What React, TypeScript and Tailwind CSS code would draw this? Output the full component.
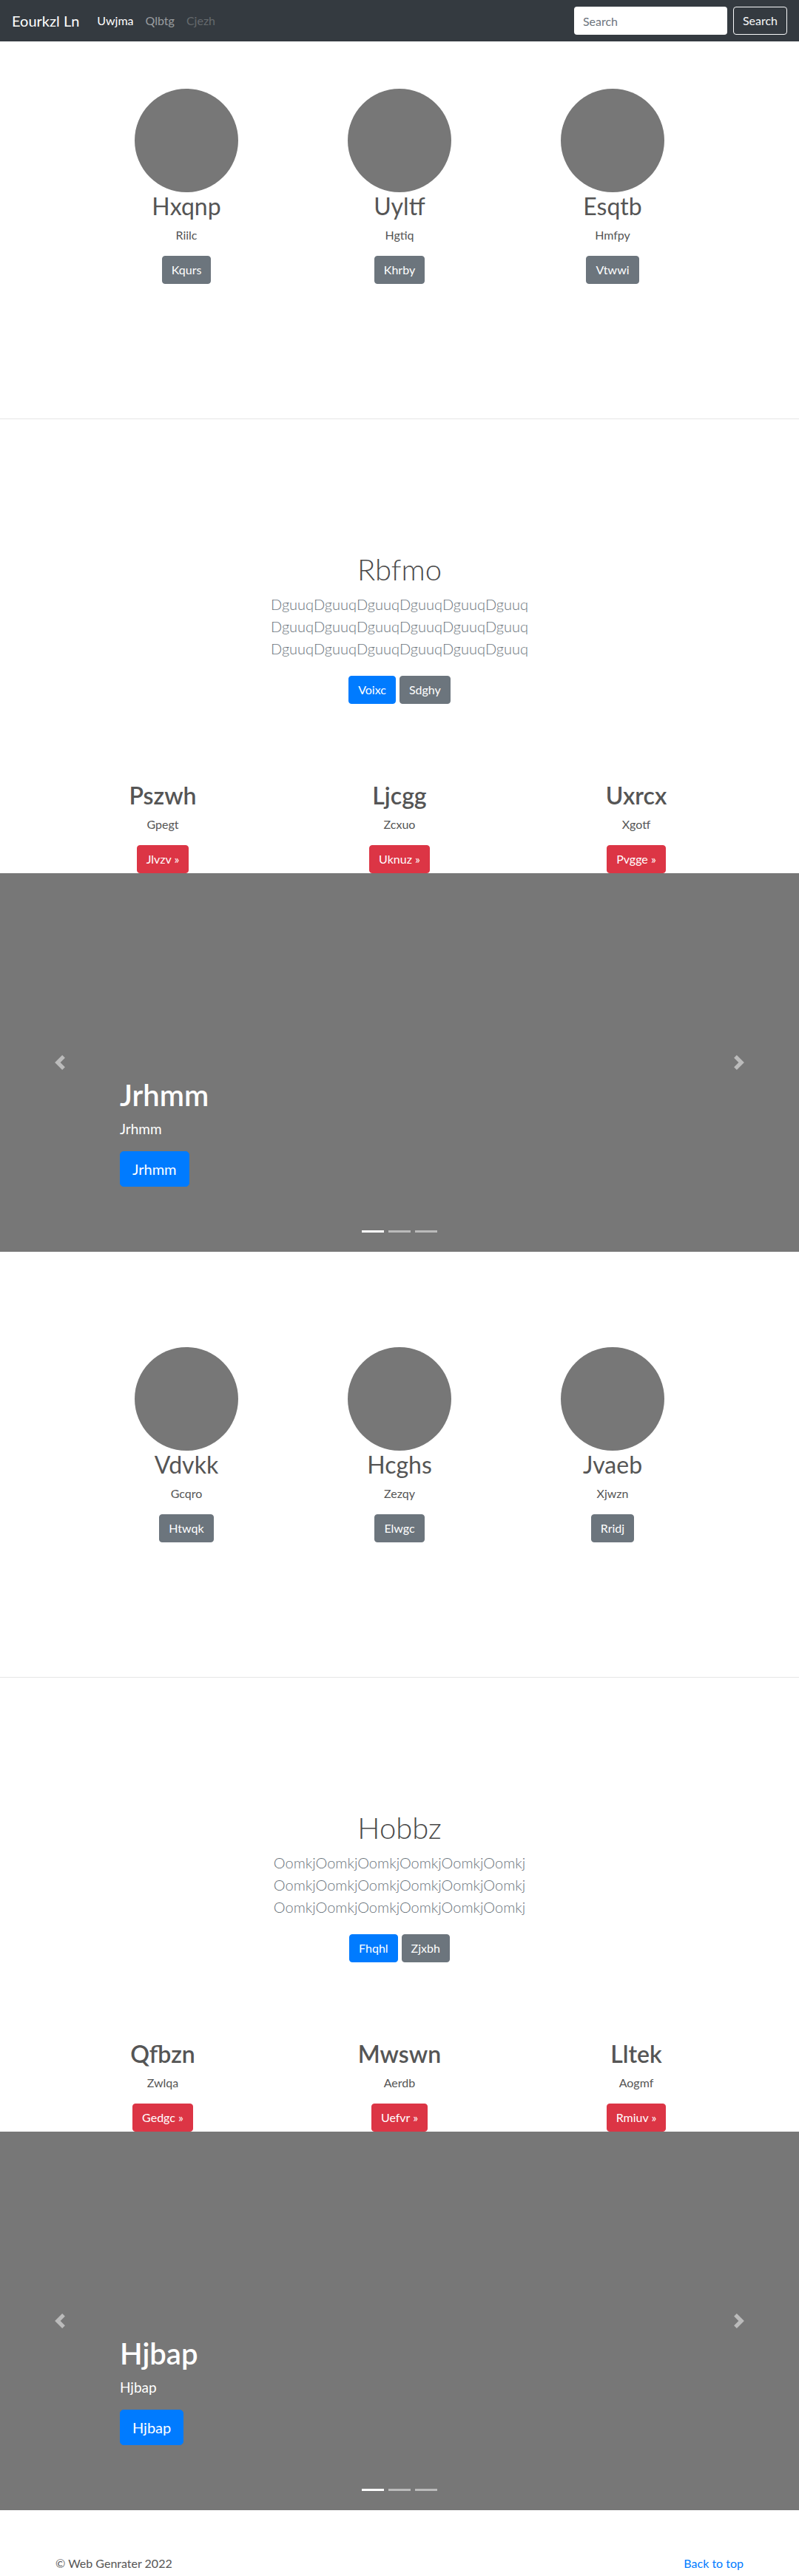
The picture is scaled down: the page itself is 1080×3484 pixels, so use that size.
/**
 * Album + carousel landing page, two repeated blocks.
 */

const font = 'font-["Lato","Open_Sans",sans-serif]'

type Feature = { title: string; sub: string; btn: string }

type Block = {
  circles: Feature[]
  heading: string
  word: string
  primary: string
  secondary: string
  cols: Feature[]
  slide: string
  top: string
}

const blocks: Block[] = [
  {
    circles: [
      { title: 'Hxqnp', sub: 'Riilc', btn: 'Kqurs' },
      { title: 'Uyltf', sub: 'Hgtiq', btn: 'Khrby' },
      { title: 'Esqtb', sub: 'Hmfpy', btn: 'Vtwwi' },
    ],
    heading: 'Rbfmo',
    word: 'Dguuq',
    primary: 'Voixc',
    secondary: 'Sdghy',
    cols: [
      { title: 'Pszwh', sub: 'Gpegt', btn: 'Jlvzv' },
      { title: 'Ljcgg', sub: 'Zcxuo', btn: 'Uknuz' },
      { title: 'Uxrcx', sub: 'Xgotf', btn: 'Pvgge' },
    ],
    slide: 'Jrhmm',
    top: 'pt-16',
  },
  {
    circles: [
      { title: 'Vdvkk', sub: 'Gcqro', btn: 'Htwqk' },
      { title: 'Hcghs', sub: 'Zezqy', btn: 'Elwgc' },
      { title: 'Jvaeb', sub: 'Xjwzn', btn: 'Rridj' },
    ],
    heading: 'Hobbz',
    word: 'Oomkj',
    primary: 'Fhqhl',
    secondary: 'Zjxbh',
    cols: [
      { title: 'Qfbzn', sub: 'Zwlqa', btn: 'Gedgc' },
      { title: 'Mwswn', sub: 'Aerdb', btn: 'Uefvr' },
      { title: 'Lltek', sub: 'Aogmf', btn: 'Rmiuv' },
    ],
    slide: 'Hjbap',
    top: 'pt-[129px]',
  },
]

function Chevron({ flip }: { flip?: boolean }) {
  return (
    <svg width="20" height="20" viewBox="0 0 8 8" className={flip ? 'rotate-180' : ''}>
      <path fill="#fff" d="M5.25 0l-4 4 4 4 1.5-1.5L4.25 4l2.5-2.5L5.25 0z" />
    </svg>
  )
}

function Carousel({ label }: { label: string }) {
  return (
    <div className="relative h-[512px] bg-[#777777]">
      {/* prev / next controls */}
      <div className="absolute inset-y-0 left-0 w-[15%] flex items-center justify-center opacity-50">
        <Chevron />
      </div>
      <div className="absolute inset-y-0 right-0 w-[15%] flex items-center justify-center opacity-50">
        <Chevron flip />
      </div>

      <div className="absolute left-[162px] bottom-[88px] text-white">
        <h1 className="text-[40px] leading-[48px] font-semibold mb-2">{label}</h1>
        <p className="text-[19px] leading-[28px] mb-[16px]">{label}</p>
        <button className="bg-[#007bff] border border-[#007bff] rounded-[5px] px-4 py-2 text-xl leading-[30px]">
          {label}
        </button>
      </div>

      <div className="absolute inset-x-0 bottom-[26px] flex justify-center gap-[6px]">
        <span className="w-[30px] h-[3px] bg-white" />
        <span className="w-[30px] h-[3px] bg-white/50" />
        <span className="w-[30px] h-[3px] bg-white/50" />
      </div>
    </div>
  )
}

function BlockView({ b }: { b: Block }) {
  return (
    <div>
      {/* circles */}
      <section className={b.top}>
        <div className="w-[864px] mx-auto grid grid-cols-3">
          {b.circles.map((c) => (
            <div key={c.title} className="flex flex-col items-center text-[#555]">
              <div className="w-[140px] h-[140px] rounded-full bg-[#777777]" />
              <h2 className="text-[32px] leading-[38px] font-normal mb-2">{c.title}</h2>
              <p className="text-base leading-6 mb-4">{c.sub}</p>
              <button className="bg-[#6c757d] border border-[#6c757d] text-white rounded px-3 py-1.5 text-base leading-6">
                {c.btn}
              </button>
            </div>
          ))}
        </div>
        <hr className="mt-[182px] border-0 border-t border-[#e6e6e6]" />
      </section>

      {/* jumbotron */}
      <section className="pt-[179px] text-center">
        <h1 className="text-[40px] leading-[48px] font-light text-[#4a4a4a] mb-2">{b.heading}</h1>
        <div className="text-xl leading-[30px] font-light text-[#6c757d]">
          {[0, 1, 2].map((i) => (
            <div key={i}>{b.word.repeat(6)}</div>
          ))}
        </div>
        <div className="flex justify-center gap-[5px] mt-[22px]">
          <button className="bg-[#007bff] border border-[#007bff] text-white rounded px-3 py-1.5 text-base leading-6">
            {b.primary}
          </button>
          <button className="bg-[#6c757d] border border-[#6c757d] text-white rounded px-3 py-1.5 text-base leading-6">
            {b.secondary}
          </button>
        </div>
      </section>

      {/* three columns */}
      <section className="pt-[105px]">
        <div className="w-[960px] mx-auto grid grid-cols-3">
          {b.cols.map((c) => (
            <div key={c.title} className="flex flex-col items-center text-[#555]">
              <h2 className="text-[32px] leading-[38px] font-semibold mb-2">{c.title}</h2>
              <p className="text-base leading-6 mb-4">{c.sub}</p>
              <button className="bg-[#dc3545] border border-[#dc3545] text-white rounded px-3 py-1.5 text-base leading-6">
                {c.btn} »
              </button>
            </div>
          ))}
        </div>
      </section>

      <Carousel label={b.slide} />
    </div>
  )
}

export default function App() {
  return (
    <div className={`${font} bg-white min-h-[3484px]`}>
      {/* navbar */}
      <nav className="h-14 bg-[#343a40] flex items-center px-4">
        <span className="text-white text-xl mr-4">Eourkzl Ln</span>
        <div className="flex text-base">
          <span className="px-2 text-white">Uwjma</span>
          <span className="px-2 text-white/50">Qlbtg</span>
          <span className="px-2 text-white/25">Cjezh</span>
        </div>
        <div className="ml-auto flex items-center gap-2">
          <input
            placeholder="Search"
            className="w-[207px] h-[38px] bg-white rounded px-3 text-base text-[#495057] placeholder:text-[#6c757d] outline-none"
          />
          <button className="h-[38px] px-3 rounded border border-[#f8f9fa] text-[#f8f9fa] text-base">
            Search
          </button>
        </div>
      </nav>

      {blocks.map((b) => (
        <BlockView key={b.heading} b={b} />
      ))}

      <footer className="w-[960px] mx-auto px-[15px] pt-[60px] flex justify-between text-base leading-6">
        <p className="text-[#555]">© Web Genrater 2022</p>
        <a href="#" className="text-[#007bff]">Back to top</a>
      </footer>
    </div>
  )
}
